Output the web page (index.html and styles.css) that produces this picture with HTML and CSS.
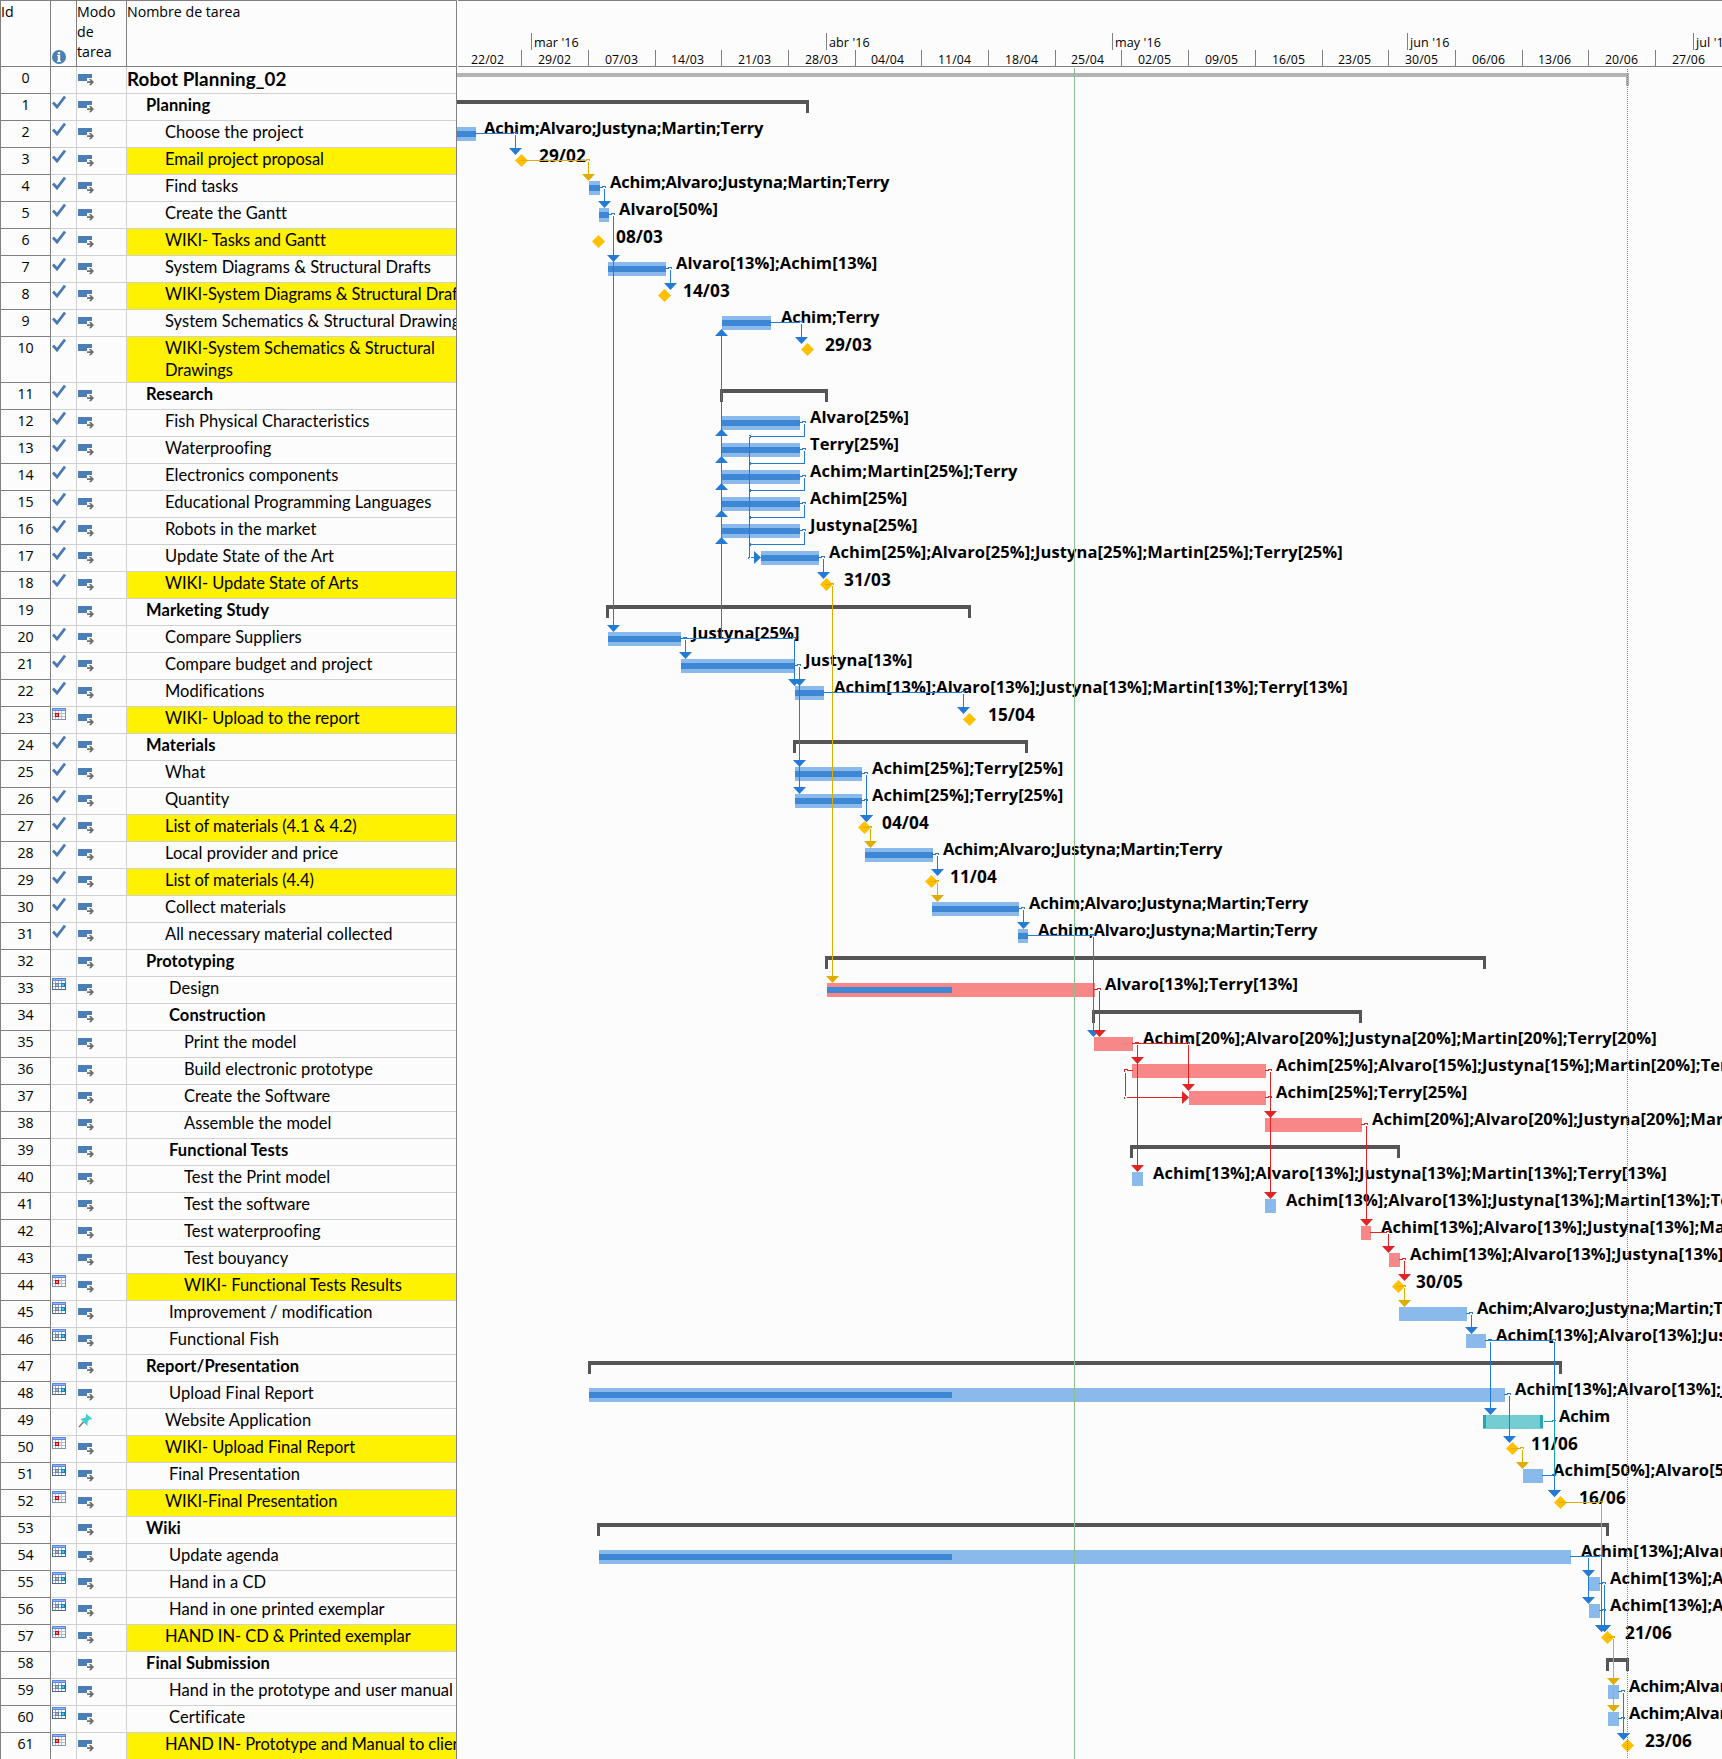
FILE: index.html
```html
<!DOCTYPE html>
<html lang="es">
<head>
    <meta charset="UTF-8">
    <meta name="viewport" content="width=device-width, initial-scale=1.0">
    <title>Robot Planning_02</title>
    <link rel="stylesheet" href="styles.css">
</head>
<body>
    <!-- Iconos reutilizados en la tabla -->
    <svg class="sprite" width="0" height="0">
        <symbol id="check" viewBox="0 0 14 14">
            <path d="M1 7.5 L5 12 L13 1.5" fill="none" stroke="#4a78b5" stroke-width="2.8"/>
        </symbol>
        <symbol id="auto" viewBox="0 0 16 12">
            <path d="M0 0H14V4H9V7H0Z" fill="#4a7eb5"/>
            <path d="M9 7.2H12.6L11 5H13L16 8L13 11.2H11L12.6 9H9Z" fill="#6e6e6e"/>
        </symbol>
        <symbol id="pin" viewBox="0 0 15 15">
            <path d="M1 14L6 8.5" stroke="#777" stroke-width="1.5"/>
            <path d="M8 0.5L14.5 6L11 6.8L9.5 9L9.5 13L6 9.5L2.5 6L6.5 5L8 3.5Z" fill="#40cfd0"/>
        </symbol>
        <symbol id="cal-blue" viewBox="0 0 14 12">
            <path d="M0 0H14V12H0Z" fill="#50658c"/>
            <path d="M0 0H14V3H0Z" fill="#5f88dc"/>
            <path d="M1 1H13V2H1Z" fill="#90b4fa"/>
            <path d="M1 3H13V11H1Z" fill="#fff"/>
            <path d="M3.5 3V11M6.5 3V11M9.5 3V11M1 5.5H13M1 8.5H13" stroke="#a3afc4"/>
            <path d="M3 5H7V9H3Z" fill="#6d82a4"/>
            <path d="M4 6H6V8H4Z" fill="#a9b6c9"/>
            <path d="M9 5H13V9H9Z" fill="#0b83bf"/>
            <path d="M10 6H12V8H10Z" fill="#35d0ff"/>
        </symbol>
        <symbol id="cal-red" viewBox="0 0 14 12">
            <path d="M0 0H14V12H0Z" fill="#7f93b8"/>
            <path d="M0 0H14V3H0Z" fill="#5f88dc"/>
            <path d="M1 1H13V2H1Z" fill="#90b4fa"/>
            <path d="M1 3H13V11H1Z" fill="#fff"/>
            <path d="M3.5 3V11M6.5 3V11M9.5 3V11M1 5.5H13M1 8.5H13" stroke="#b4bfd2"/>
            <path d="M3 5H7V9H3Z" fill="#d80000"/>
            <path d="M4 6H6V8H4Z" fill="#ff8080"/>
        </symbol>
    </svg>

    <div class="project">
        <!-- Tabla de tareas -->
        <div class="tasks">
            <div class="head">
                <div>Id</div>
                <div class="info">
                    <svg width="14" height="14" viewBox="0 0 14 14">
                        <circle cx="7" cy="7" r="7" fill="#4a7eb5"/>
                        <path d="M5.8 2H8.2V4.2H5.8ZM5 5H8.2V10.8H9V12H5V10.8H5.8V6H5Z" fill="#fff"/>
                    </svg>
                </div>
                <div>Modo de tarea</div>
                <div>Nombre de tarea</div>
            </div>
            <div id="rows"></div>
        </div>

        <!-- Diagrama de Gantt -->
        <svg id="chart" class="chart" width="1265" height="1759" viewBox="457 0 1265 1759"></svg>
    </div>

    <script src="gantt.js"></script>
</body>
</html>
```
FILE: styles.css
```css
body {
    margin: 0;
    background-color: #fcfcfc;
    color: #000;
    overflow: hidden;
}

.sprite {
    position: absolute;
}

.project {
    display: flex;
    height: 1759px;
    overflow: hidden;
}

/* Tabla */
.tasks {
    box-sizing: border-box;
    flex: none;
    width: 457px;
    border-left: 1px solid #808080;
    border-right: 1px solid #808080;
}

.head,
.row {
    display: grid;
    grid-template-columns: 50px 26px 50px 329px;
    box-sizing: border-box;
}

.head {
    height: 67px;
    border-top: 1px solid #808080;
    border-bottom: 1px solid #808080;
    font: 14.2px/20px "Open Sans", sans-serif;
}

.head div {
    box-sizing: border-box;
    padding: 1px 0 0;
    border-right: 1px solid #808080;
}

.head div:last-child {
    border-right: none;
}

.head .info {
    display: flex;
    align-items: flex-end;
    padding: 0 0 2px 1px;
}

.row {
    height: 27px;
}

.row.tall {
    height: 46px;
}

.row > div {
    box-sizing: border-box;
    border-right: 1px solid #d0d0d0;
    border-bottom: 1px solid #d0d0d0;
    overflow: hidden;
}

.row .id {
    border-color: #808080;
    font: 14.2px/22px "Open Sans", sans-serif;
    text-align: center;
}

.row .state {
    padding: 1px 0 0 1px;
}

.row .mode {
    padding: 7px 0 0 1px;
}

.row svg {
    display: block;
}

.row .pin {
    margin-top: -3px;
}

.row .name {
    border-right: none;
    font: 16.5px/22px Lato, sans-serif;
    font-variant-ligatures: none;
    letter-spacing: 0.04px;
    white-space: nowrap;
}

.row .bold {
    font-weight: bold;
    letter-spacing: 0.1px;
}

.row .yellow {
    background-color: #fff200;
    letter-spacing: -0.06px;
}

.l0 { padding-left: 1px; }
.l1 { padding-left: 19px; }
.l2 { padding-left: 38px; }
.l3 { padding-left: 42px; }
.l4 { padding-left: 57px; }

.row .name.l0 {
    padding: 1px 0 0;
    font-size: 18.8px;
}

/* Diagrama */
.chart {
    display: block;
    flex: none;
}

.chart text {
    font: bold 16.5px "Open Sans", sans-serif;
    letter-spacing: 0.08px;
}

.chart .people {
    letter-spacing: -0.2px;
}

.chart .date {
    font-size: 17.2px;
}

.chart .week {
    font: 12.3px "Open Sans", sans-serif;
    text-anchor: middle;
}

.chart .month {
    font: 12.6px "Open Sans", sans-serif;
}

.line {
    fill: none;
    stroke-width: 1px;
    shape-rendering: crispEdges;
}

.axis { stroke: #808080; }
.today { stroke: #8fbf8f; }
.finish { stroke: #808080; stroke-dasharray: 1 1; }

.bar { shape-rendering: crispEdges; }
.task { fill: #8abaeb; }
.critical { fill: #f88888; }
.manual { fill: #74cdd2; }
.manual-end { fill: #2aa5ad; }
.progress { fill: #3d87d4; }
.summary { fill: #555; }
.total { fill: #b4b4b4; }
.milestone { fill: #ffc000; }

.line.blue { stroke: #247bd5; }
.line.red { stroke: #e02424; }
.line.gold { stroke: #e0ac00; }
.line.teal { stroke: #17a8a8; }
.arrow.blue { fill: #247bd5; }
.arrow.red { fill: #e02424; }
.arrow.gold { fill: #e0ac00; }
```
FILE: gantt.js
```javascript
const T5 = 'Achim;Alvaro;Justyna;Martin;Terry';
const all = p => T5.split(';').map(n => n + '[' + p + '%]').join(';');

// [nombre, nivel, estado, tipo, inicio, fin, etiqueta, x etiqueta, avance]
// tipo: s = resumen, t = tarea, c = crítica, m = hito, w = manual
const tasks = [
    ['Robot Planning_02', 0, '', 's', 440, 1629],
    ['Planning', 1, 'check', 's', 440, 809],
    ['Choose the project', 2, 'check', 't', 440, 476, T5, 484, 476],
    ['Email project proposal', 2, 'check', 'm', 521, 0, '29/02', 539],
    ['Find tasks', 2, 'check', 't', 589, 600, T5, 610, 600],
    ['Create the Gantt', 2, 'check', 't', 599, 609, 'Alvaro[50%]', 619, 609],
    ['WIKI- Tasks and Gantt', 2, 'check', 'm', 598, 0, '08/03', 616],
    ['System Diagrams & Structural Drafts', 2, 'check', 't', 608, 666, 'Alvaro[13%];Achim[13%]', 676, 666],
    ['WIKI-System Diagrams & Structural Drafts', 2, 'check', 'm', 664, 0, '14/03', 683],
    ['System Schematics & Structural Drawings', 2, 'check', 't', 722, 771, 'Achim;Terry', 781, 771],
    ['WIKI-System Schematics & Structural<br>Drawings', 2, 'check', 'm', 807, 0, '29/03', 825],
    ['Research', 1, 'check', 's', 720, 828],
    ['Fish Physical Characteristics', 2, 'check', 't', 722, 800, 'Alvaro[25%]', 810, 800],
    ['Waterproofing', 2, 'check', 't', 722, 800, 'Terry[25%]', 810, 800],
    ['Electronics components', 2, 'check', 't', 722, 800, 'Achim;Martin[25%];Terry', 810, 800],
    ['Educational Programming Languages', 2, 'check', 't', 722, 800, 'Achim[25%]', 810, 800],
    ['Robots in the market', 2, 'check', 't', 722, 800, 'Justyna[25%]', 810, 800],
    ['Update State of the Art', 2, 'check', 't', 761, 819, all(25), 829, 819],
    ['WIKI- Update State of Arts', 2, 'check', 'm', 826, 0, '31/03', 844],
    ['Marketing Study', 1, '', 's', 606, 971],
    ['Compare Suppliers', 2, 'check', 't', 608, 681, 'Justyna[25%]', 692, 681],
    ['Compare budget and project', 2, 'check', 't', 681, 795, 'Justyna[13%]', 805, 795],
    ['Modifications', 2, 'check', 't', 795, 824, all(13), 834, 824],
    ['WIKI- Upload to the report', 2, 'cal-red', 'm', 969, 0, '15/04', 988],
    ['Materials', 1, 'check', 's', 793, 1028],
    ['What', 2, 'check', 't', 795, 862, 'Achim[25%];Terry[25%]', 872, 862],
    ['Quantity', 2, 'check', 't', 795, 862, 'Achim[25%];Terry[25%]', 872, 862],
    ['List of materials (4.1 & 4.2)', 2, 'check', 'm', 864, 0, '04/04', 882],
    ['Local provider and price', 2, 'check', 't', 865, 933, T5, 943, 933],
    ['List of materials (4.4)', 2, 'check', 'm', 931, 0, '11/04', 950],
    ['Collect materials', 2, 'check', 't', 932, 1019, T5, 1029, 1019],
    ['All necessary material collected', 2, 'check', 't', 1018, 1028, T5, 1038, 1028],
    ['Prototyping', 1, '', 's', 825, 1486],
    ['Design', 3, 'cal-blue', 'c', 827, 1095, 'Alvaro[13%];Terry[13%]', 1105, 952],
    ['Construction', 3, '', 's', 1092, 1362],
    ['Print the model', 4, '', 'c', 1094, 1133, all(20), 1143],
    ['Build electronic prototype', 4, '', 'c', 1132, 1266, 'Achim[25%];Alvaro[15%];Justyna[15%];Martin[20%];Terry[25%]', 1276],
    ['Create the Software', 4, '', 'c', 1189, 1266, 'Achim[25%];Terry[25%]', 1276],
    ['Assemble the model', 4, '', 'c', 1265, 1362, all(20), 1372],
    ['Functional Tests', 3, '', 's', 1130, 1400],
    ['Test the Print model', 4, '', 't', 1132, 1143, all(13), 1153],
    ['Test the software', 4, '', 't', 1265, 1276, all(13), 1286],
    ['Test waterproofing', 4, '', 'c', 1361, 1371, all(13), 1381],
    ['Test bouyancy', 4, '', 'c', 1389, 1400, all(13), 1410],
    ['WIKI- Functional Tests Results', 4, 'cal-red', 'm', 1398, 0, '30/05', 1416],
    ['Improvement / modification', 3, 'cal-blue', 't', 1399, 1467, T5, 1477],
    ['Functional Fish', 3, 'cal-blue', 't', 1466, 1486, all(13), 1496],
    ['Report/Presentation', 1, '', 's', 588, 1562],
    ['Upload Final Report', 3, 'cal-blue', 't', 589, 1505, all(13), 1515, 952],
    ['Website Application', 2, '', 'w', 1483, 1543, 'Achim', 1559],
    ['WIKI- Upload Final Report', 2, 'cal-red', 'm', 1512, 0, '11/06', 1531],
    ['Final Presentation', 3, 'cal-blue', 't', 1523, 1543, all(50), 1553],
    ['WIKI-Final Presentation', 2, 'cal-red', 'm', 1560, 0, '16/06', 1579],
    ['Wiki', 1, '', 's', 597, 1609],
    ['Update agenda', 3, 'cal-blue', 't', 599, 1571, all(13), 1581, 952],
    ['Hand in a CD', 3, 'cal-blue', 't', 1589, 1600, all(13), 1610],
    ['Hand in one printed exemplar', 3, 'cal-blue', 't', 1589, 1600, all(13), 1610],
    ['HAND IN- CD & Printed exemplar', 2, 'cal-red', 'm', 1607, 0, '21/06', 1625],
    ['Final Submission', 1, '', 's', 1606, 1629],
    ['Hand in the prototype and user manual', 3, 'cal-blue', 't', 1608, 1619, T5, 1629],
    ['Certificate', 3, 'cal-blue', 't', 1608, 1619, T5, 1629],
    ['HAND IN- Prototype and Manual to client', 2, 'cal-red', 'm', 1627, 0, '23/06', 1645]
];

// [color, x origen, fila origen, x destino, fila destino]
const links = [
    ['blue', 476, 2, 515, 3], ['gold', 521, 3, 588, 4], ['blue', 600, 4, 604, 5],
    ['blue', 609, 5, 613, 7], ['blue', 609, 5, 613, 20], ['blue', 666, 7, 670, 8],
    ['blue', 771, 9, 801, 10], ['blue', 819, 17, 823, 18], ['gold', 826, 18, 832, 33],
    ['blue', 681, 20, 685, 21], ['blue', 681, 20, 794, 22], ['blue', 795, 21, 799, 22],
    ['blue', 795, 21, 799, 25], ['blue', 795, 21, 799, 26], ['blue', 824, 22, 963, 23],
    ['blue', 862, 25, 866, 27], ['blue', 862, 26, 866, 27], ['gold', 864, 27, 870, 28],
    ['blue', 933, 28, 937, 29], ['gold', 931, 29, 937, 30], ['blue', 1019, 30, 1023, 31],
    ['blue', 1028, 31, 1093, 35], ['red', 1095, 33, 1099, 35], ['red', 1133, 35, 1137, 36],
    ['red', 1133, 35, 1137, 40], ['red', 1133, 35, 1188, 37], ['red', 1266, 36, 1270, 38],
    ['red', 1266, 37, 1270, 41], ['red', 1362, 38, 1366, 42], ['red', 1371, 42, 1388, 43],
    ['red', 1400, 43, 1404, 44], ['gold', 1398, 44, 1404, 45], ['blue', 1467, 45, 1471, 46],
    ['blue', 1486, 46, 1490, 49], ['blue', 1486, 46, 1554, 52], ['blue', 1505, 48, 1509, 50],
    ['gold', 1512, 50, 1522, 51], ['blue', 1543, 51, 1554, 52], ['gold', 1560, 52, 1601, 57],
    ['blue', 1571, 54, 1588, 55], ['blue', 1571, 54, 1588, 56], ['blue', 1571, 54, 1601, 57],
    ['blue', 1600, 55, 1604, 57], ['blue', 1600, 56, 1604, 57], ['gold', 1607, 57, 1613, 59],
    ['gold', 1607, 57, 1613, 60], ['blue', 1619, 59, 1623, 61], ['blue', 1619, 60, 1623, 61]
];

const rowTop = r => r <= 10 ? 67 + 27 * r : 383 + 27 * (r - 11);
const esc = s => s.replace(/&/g, '&amp;');
const rect = (cls, x, y, w, h) => `<rect class="bar ${cls}" x="${x}" y="${y}" width="${w}" height="${h}"/>`;
const line = (cls, d) => `<path class="line ${cls}" transform="translate(.5 .5)" d="${d}"/>`;
const arrow = (cls, d) => `<path class="arrow ${cls}" d="${d}"/>`;

// Filas de la tabla
document.getElementById('rows').innerHTML = tasks.map((t, i) => {
    const cls = 'name l' + t[1] + (t[3] === 's' ? ' bold' : '') + (t[3] === 'm' ? ' yellow' : '');
    const state = t[2] === 'check' ? '<svg width="14" height="14"><use href="#check"/></svg>'
        : t[2] ? `<svg width="14" height="12"><use href="#${t[2]}"/></svg>` : '';
    const mode = t[3] === 'w' ? '<svg class="pin" width="15" height="15"><use href="#pin"/></svg>'
        : '<svg width="16" height="12"><use href="#auto"/></svg>';
    return `<div class="row${i === 10 ? ' tall' : ''}"><div class="id">${i}</div><div class="state">${state}</div>` +
        `<div class="mode">${mode}</div><div class="${cls}">${esc(t[0])}</div></div>`;
}).join('');

let svg = '';

// Escala de tiempo
svg += line('axis', 'M457 0H1722M457 66H1722');
[[531, "mar '16"], [826, "abr '16"], [1112, "may '16"], [1407, "jun '16"], [1693, "jul '16"]].forEach(m => {
    svg += line('axis', `M${m[0]} 32V49`) + `<text class="month" x="${m[0] + 3}" y="47">${m[1]}</text>`;
});
const weeks = ['22/02', '29/02', '07/03', '14/03', '21/03', '28/03', '04/04', '11/04', '18/04', '25/04',
    '02/05', '09/05', '16/05', '23/05', '30/05', '06/06', '13/06', '20/06', '27/06'];
weeks.forEach((w, i) => {
    const x = Math.floor(521.6 + 66.7 * i);
    if (i < 18) svg += line('axis', `M${x} 49V66`);
    svg += `<text class="week" x="${x - 33.5}" y="64">${w}</text>`;
});

// Barras y etiquetas
tasks.forEach((t, i) => {
    const y = rowTop(i), x = t[4], w = t[5] - t[4];
    if (t[3] === 's') {
        const c = i ? 'summary' : 'total';
        svg += rect(c, x, y + 6, w, 4) + rect(c, x, y + 6, 3, 13) + rect(c, t[5] - 3, y + 6, 3, 13);
    } else if (t[3] === 'm') {
        svg += `<path class="milestone" d="M${x + .5} ${y + 6}l6.5 6.5l-6.5 6.5l-6.5 -6.5z"/>`;
    } else {
        svg += rect({ t: 'task', c: 'critical', w: 'manual' }[t[3]], x, y + 6, w, 14);
        if (t[3] === 'w') svg += rect('manual-end', x, y + 6, 3, 13) + rect('manual-end', t[5] - 3, y + 6, 3, 13);
        if (t[8]) svg += rect('progress', x, y + 10, t[8] - x, 6);
    }
    if (t[6]) {
        const date = t[3] === 'm';
        const c = date ? 'date' : t[6].includes('[') ? '' : 'people';
        svg += `<text class="${c}" x="${t[7]}" y="${y + (date ? 13.5 : 13)}">${t[6]}</text>`;
    }
});

// Vínculos
links.forEach(([c, x1, r1, x2, r2]) => {
    const y = rowTop(r1) + 12, tip = rowTop(r2) + (tasks[r2][3] === 'm' ? 7 : 6);
    svg += line(c, `M${x1 - 2} ${y}H${x2 - 2}V${y - 1}H${x2 + 1}V${y}M${x2} ${y + 1}V${tip - 6}`);
    svg += arrow(c, `M${x2 - 6} ${tip - 7}h13l-6.5 7z`);
});

// Compare Suppliers hacia arriba
svg += line('blue', `M721 ${rowTop(20) + 12}V${rowTop(9) + 22}`);
[9, 12, 13, 14, 15, 16].forEach(r => {
    svg += arrow('blue', `M715 ${rowTop(r) + 26}h13l-6.5 -7z`);
});

// Investigación hacia Update State of the Art
for (let r = 12; r <= 16; r++) {
    const y = rowTop(r) + 12;
    svg += line('blue', `M798 ${y}H802V${y - 1}H805V${y}M804 ${y + 1}V${y + 14}H750M748 ${y + 13}H750V${y + 15}`);
}
svg += line('blue', `M749 ${rowTop(12) + 26}V${rowTop(17) + 12}M748 ${rowTop(17) + 13}V${rowTop(17) + 11}M750 ${rowTop(17) + 12}H755`);
svg += arrow('blue', `M754 ${rowTop(17) + 6}v13l7 -6.5z`);

// Comienzo a comienzo de 36 a 37
svg += line('red', `M1132 ${rowTop(36) + 12}H1127V${rowTop(36) + 11}H1124V${rowTop(36) + 13}M1125 ${rowTop(36) + 14}V${rowTop(37) + 10}M1124 ${rowTop(37) + 13}V${rowTop(37) + 11}M1126 ${rowTop(37) + 12}H1183`);
svg += arrow('red', `M1182 ${rowTop(37) + 6}v13l7 -6.5z`);

svg += line('teal', `M1543 ${rowTop(49) + 12}H1552V${rowTop(49) + 11}H1555M1554 ${rowTop(49) + 13}V${rowTop(51) + 11}`);

// Fecha actual y fin del proyecto
svg += line('today', 'M1074 67V1759') + line('finish', 'M1627 68V1759');

document.getElementById('chart').innerHTML = svg;
```
